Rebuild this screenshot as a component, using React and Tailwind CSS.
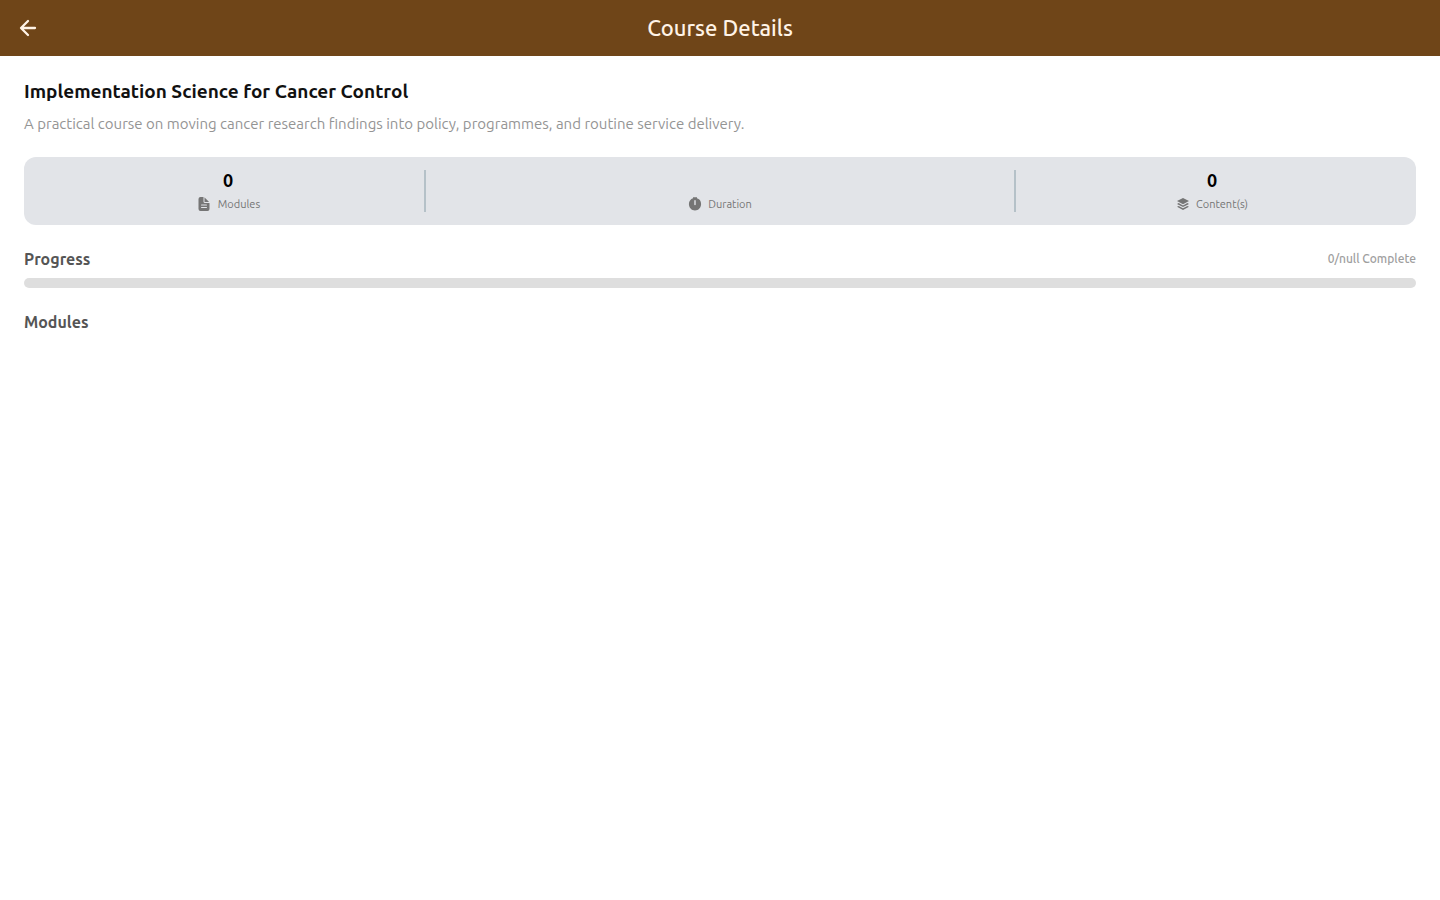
import React from "react";
import { IoDocumentText } from "react-icons/io5";

function BackIcon() {
  return (
    <svg
      viewBox="0 0 24 24"
      className="h-6 w-6"
      fill="none"
      stroke="currentColor"
      strokeWidth="2.3"
      strokeLinecap="round"
      strokeLinejoin="round"
      aria-hidden="true"
    >
      <path d="M19 12H5.2M12 5 5 12l7 7" />
    </svg>
  );
}

function StopwatchIcon() {
  return (
    <svg viewBox="0 0 14 14" className="h-3.5 w-3.5" fill="currentColor" aria-hidden="true">
      <path
        fillRule="evenodd"
        d="M5 .3h4v1l2 .9 1 1c.7 1 1.1 2.300 1.100 3.800C13.100 10.600 10.400 13.500 7 13.500S.9 10.600.9 7C.9 4.200 2.600 2 5 1.200ZM6.300 3.700v3.800a.7.7 0 0 0 1.400 0V3.700a.7.7 0 0 0-1.400 0Z"
      />
    </svg>
  );
}

function LayersIcon() {
  return (
    <svg viewBox="0 0 14 14" className="h-3.5 w-3.5" fill="currentColor" aria-hidden="true">
      <path d="M7 1 13 4.1 7 7.2 1 4.1Z" />
      <path d="M1 6.9 2.6 6.1 7 8.4l4.400-2.300 1.600.8L7 10Z" />
      <path d="M1 9.800 2.600 9 7 11.300 11.400 9l1.600.8L7 12.900Z" />
    </svg>
  );
}

function Stat({ value, icon, label }) {
  return (
    <div className="flex flex-col items-center gap-0.5">
      <div className="h-6 text-[18px] leading-6 font-bold text-black">{value}</div>
      <div className="flex h-5 items-center gap-1.5 text-[#757575]">
        {icon}
        <span className="text-[11px] leading-5">{label}</span>
      </div>
    </div>
  );
}

function Divider() {
  return <div className="h-[42px] w-0.5 bg-[#b5c1c8]" />;
}

function App() {
  return (
    <div className="min-h-screen bg-white font-['Ubuntu','Noto_Sans',sans-serif]">
      <header className="grid h-14 grid-cols-[1fr_auto_1fr] items-center bg-[#6f4518] px-4 text-[#fff3e6]">
        <button type="button" aria-label="Back" className="w-6">
          <BackIcon />
        </button>
        <h1 className="text-[22px] leading-7 font-medium">Course Details</h1>
      </header>

      <main className="px-6 pt-5">
        <h2 className="text-[19px] leading-[30px] font-semibold text-[#111111]">
          Implementation Science for Cancer Control
        </h2>
        <p className="mt-1.5 text-[15px] leading-6 text-[#949494]">
          A practical course on moving cancer research findings into policy, programmes, and routine
          service delivery.
        </p>

        <section className="mt-[21px] grid grid-cols-[2fr_auto_3fr_auto_2fr] items-center rounded-xl bg-[#e2e4e8] px-2 py-[11px]">
          <Stat value="0" icon={<IoDocumentText className="h-4 w-4" />} label="Modules" />
          <Divider />
          <Stat value="" icon={<StopwatchIcon />} label="Duration" />
          <Divider />
          <Stat value="0" icon={<LayersIcon />} label="Content(s)" />
        </section>

        <section className="mt-[22px]">
          <div className="flex items-center justify-between">
            <h3 className="text-[16px] leading-6 font-bold text-[#555555]">Progress</h3>
            <span className="text-[12px] leading-6 font-medium text-[#9e9e9e]">0/null Complete</span>
          </div>
          <div
            role="progressbar"
            aria-label="Course progress"
            aria-valuenow={0}
            className="mt-[7px] h-2.5 rounded-full bg-[#dedede]"
          />
        </section>

        <h3 className="mt-[22px] text-[16px] leading-6 font-bold text-[#555555]">Modules</h3>
      </main>
    </div>
  );
}

export default App;
